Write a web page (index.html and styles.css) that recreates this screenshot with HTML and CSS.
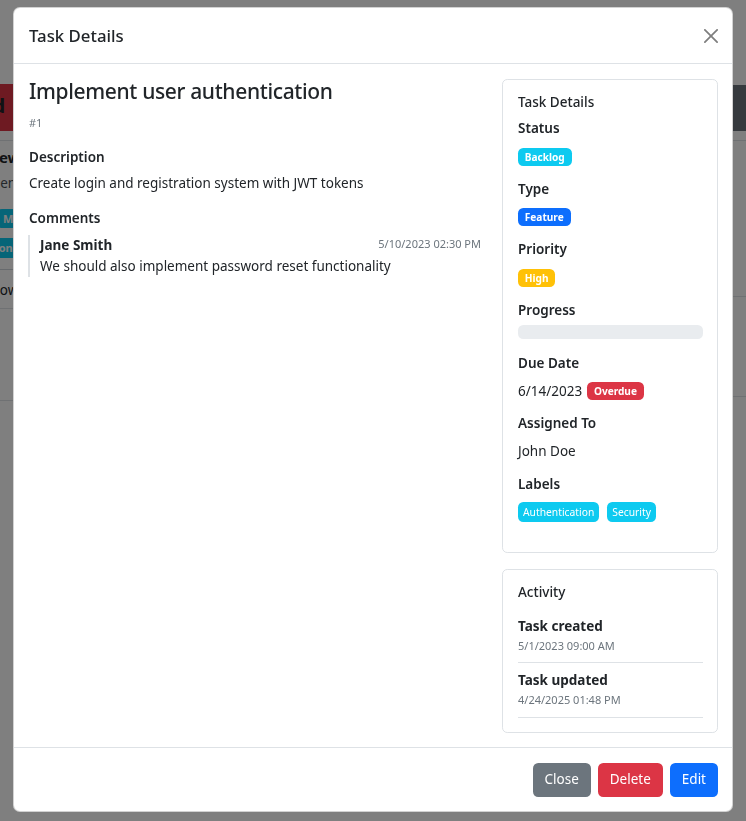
FILE: index.html
```html
<!DOCTYPE html>
<html lang="en">
<head>
<meta charset="utf-8">
<title>Task Details</title>
<link rel="stylesheet" href="styles.css">
</head>
<body>
<div class="page">
  <div class="board">
    <section class="lane lane-left">
      <div class="lane-head lane-head-red">Blocked</div>
      <div class="lane-card">
        <div class="lane-card-title">Code Review</div>
        <div class="lane-card-text">Implement login flow</div>
        <div class="lane-badges"><span class="lane-badge lane-badge-1">Medium</span></div>
        <div class="lane-badges lane-badges-2"><span class="lane-badge lane-badge-2">Frontend</span></div>
      </div>
      <div class="lane-more">Show more</div>
      <div class="lane-spacer"></div>
    </section>
    <section class="lane lane-right">
      <div class="lane-head lane-head-gray"></div>
      <div class="lane-row lane-row-1"></div>
      <div class="lane-row lane-row-2"></div>
    </section>
  </div>
</div>

<div class="modal-backdrop"></div>
<div class="modal">
  <div class="modal-content">
    <header class="modal-header">
      <h5 class="modal-title">Task Details</h5>
      <button class="btn-close" type="button" aria-label="Close">
        <svg viewBox="0 0 16 16" width="14" height="14" aria-hidden="true"><path fill="#000" d="M.293.293a1 1 0 0 1 1.414 0L8 6.586 14.293.293a1 1 0 1 1 1.414 1.414L9.414 8l6.293 6.293a1 1 0 0 1-1.414 1.414L8 9.414l-6.293 6.293a1 1 0 0 1-1.414-1.414L6.586 8 .293 1.707a1 1 0 0 1 0-1.414z"/></svg>
      </button>
    </header>
    <div class="modal-body">
      <div class="main-col">
        <h3 class="task-title">Implement user authentication</h3>
        <p class="task-id">#1</p>
        <h6 class="section-label">Description</h6>
        <p class="desc">Create login and registration system with JWT tokens</p>
        <h6 class="section-label section-label-comments">Comments</h6>
        <div class="comment">
          <div class="comment-head">
            <strong class="comment-author">Jane Smith</strong>
            <small class="comment-date">5/10/2023 02:30 PM</small>
          </div>
          <p class="comment-text">We should also implement password reset functionality</p>
        </div>
      </div>
      <aside class="side-col">
        <div class="card card-details">
          <div class="card-body">
            <h6 class="card-title">Task Details</h6>
            <div class="field">
              <div class="field-label">Status</div>
              <div class="field-value"><span class="badge bg-info">Backlog</span></div>
            </div>
            <div class="field">
              <div class="field-label">Type</div>
              <div class="field-value"><span class="badge bg-primary">Feature</span></div>
            </div>
            <div class="field">
              <div class="field-label">Priority</div>
              <div class="field-value"><span class="badge bg-warning">High</span></div>
            </div>
            <div class="field field-progress">
              <div class="field-label">Progress</div>
              <div class="progress"></div>
            </div>
            <div class="field">
              <div class="field-label">Due Date</div>
              <div class="field-value"><span>6/14/2023</span><span class="badge bg-danger">Overdue</span></div>
            </div>
            <div class="field">
              <div class="field-label">Assigned To</div>
              <div class="field-value">John Doe</div>
            </div>
            <div class="field field-labels">
              <div class="field-label">Labels</div>
              <div class="field-value"><span class="badge label-badge bg-info">Authentication</span><span class="badge label-badge bg-info">Security</span></div>
            </div>
          </div>
        </div>
        <div class="card card-activity">
          <div class="card-body">
            <h6 class="card-title card-title-activity">Activity</h6>
            <div class="activity-item">
              <div class="activity-title">Task created</div>
              <div class="activity-date">5/1/2023 09:00 AM</div>
            </div>
            <div class="activity-item">
              <div class="activity-title">Task updated</div>
              <div class="activity-date">4/24/2025 01:48 PM</div>
            </div>
          </div>
        </div>
      </aside>
    </div>
    <footer class="modal-footer">
      <button class="btn btn-secondary" type="button">Close</button>
      <button class="btn btn-danger" type="button">Delete</button>
      <button class="btn btn-primary" type="button">Edit</button>
    </footer>
  </div>
</div>
</body>
</html>
```

FILE: styles.css
```css
* { box-sizing: border-box; }

html { font-size: 14px; }

body {
  margin: 0;
  height: 821px;
  overflow: hidden;
  background: #fff;
  color: #212529;
  font-family: "Noto Sans", "Segoe UI", sans-serif;
  font-size: 13.5px;
  line-height: 21px;
}

/* ---------- page behind the modal ---------- */
.page { height: 821px; overflow: hidden; }

.board {
  display: flex;
  justify-content: space-between;
  padding-top: 84px;
}

.lane { flex: none; white-space: nowrap; }
.lane-left { width: 213px; margin-left: -200px; overflow: hidden; }
.lane-right { width: 260px; margin-right: -200px; padding-top: 1px; }

.lane-head { height: 47px; }
.lane-head-red {
  background: #dc3545;
  color: #212529;
  font-size: 20px;
  font-weight: 700;
  line-height: 44px;
  padding-left: 126px;
}
.lane-head-gray {
  height: 46px;
  background: #6c757d;
}

.lane-card {
  margin-top: 9px;
  border-top: 1px solid #dee2e6;
  border-bottom: 1px solid #ced4da;
  padding: 6px 0 12px;
}
.lane-card-title {
  font-size: 15px;
  font-weight: 700;
  line-height: 20px;
  padding-left: 126px;
}
.lane-card-text {
  margin-top: 6px;
  color: #495057;
  padding-left: 151px;
}
.lane-badges { margin-top: 14px; height: 19px; padding-left: 198px; }
.lane-badges-2 { margin-top: 10px; height: 20px; padding-left: 183px; }
.lane-badge {
  display: inline-block;
  height: 100%;
  padding: 0 5px;
  border-radius: 4px;
  background: #0dcaf0;
  color: #fff;
  font-size: 11px;
  font-weight: 700;
  line-height: 19px;
}
.lane-more {
  margin-top: 10px;
  padding: 0 0 7px 184px;
  border-bottom: 1px solid #dee2e6;
}
.lane-spacer { height: 92px; border-bottom: 1px solid #dee2e6; }

.lane-row { border-top: 1px solid #dee2e6; }
.lane-row-1 { margin-top: 9px; height: 156px; }
.lane-row-2 { height: 101px; border-bottom: 1px solid #dee2e6; }

/* ---------- modal ---------- */
.modal-backdrop {
  position: fixed;
  inset: 0;
  background: rgba(0, 0, 0, 0.5);
}

.modal {
  position: fixed;
  inset: 0;
  padding: 7px 0 0 13px;
}

.modal-content {
  width: 720px;
  background: #fff;
  border: 1px solid rgba(0, 0, 0, 0.175);
  border-radius: 7px;
}

.modal-header {
  display: flex;
  align-items: center;
  height: 56px;
  padding: 0 14px 0 15px;
  border-bottom: 1px solid #dee2e6;
}

.modal-title {
  margin: 0;
  font-size: 16.8px;
  font-weight: 500;
  line-height: 26px;
}

.btn-close {
  width: 21px;
  height: 21px;
  padding: 3.5px;
  margin: 0 -3.5px 0 auto;
  border: 0;
  background: transparent;
  opacity: 0.5;
}
.btn-close svg { display: block; }

.modal-body {
  display: grid;
  grid-template-columns: 453px 216px;
  column-gap: 21px;
  align-items: start;
  padding: 14px;
}

.main-col { padding-left: 1px; }

.task-title {
  margin: 0 0 7px;
  font-size: 21px;
  letter-spacing: -0.35px;
  font-weight: 500;
  line-height: 27px;
}

.task-id {
  margin: 0 0 14px;
  color: #6c757d;
  font-size: 11px;
}

.section-label {
  margin: 0 0 5px;
  font-size: 13.5px;
  font-weight: 600;
  line-height: 21px;
}
.section-label-comments { margin-bottom: 6px; }

.desc { margin: 0 0 14px; }

.comment {
  margin-left: -1px;
  border-left: 2px solid #dee2e6;
  padding-left: 10px;
}
.comment-head {
  display: flex;
  justify-content: space-between;
  align-items: flex-start;
}
.comment-author { font-weight: 700; }
.comment-date {
  font-size: 11px;
  color: #6c757d;
  line-height: 18px;
}
.comment-text { margin: 0; }

/* side cards */
.card {
  background: #fff;
  border: 1px solid #dee2e6;
  border-radius: 5.25px;
}
.card-body { padding: 14px 14px 14px 15px; }
.card-details { margin-top: 1px; }
.card-activity { margin-top: 16px; }

.card-title {
  margin: 0 0 7px;
  font-size: 13.5px;
  font-weight: 500;
  line-height: 17px;
}
.card-title-activity { margin-bottom: 8px; }

.field { margin-bottom: 11.5px; }
.field-label { font-weight: 600; margin-bottom: 7px; }
.field-value {
  display: flex;
  align-items: center;
  gap: 5px;
  height: 21px;
}

.field-progress { margin-bottom: 13.5px; }
.field-progress .field-label { margin-bottom: 4.5px; }
.progress {
  height: 14px;
  background: #e9ecef;
  border-radius: 5.25px;
}

.field-labels { margin-bottom: 16.5px; }
.field-labels .field-value { height: 20px; gap: 8px; }

.badge {
  display: inline-block;
  height: 18px;
  padding: 0 6.8px;
  border-radius: 5.25px;
  color: #fff;
  font-size: 10.1px;
  font-weight: 700;
  line-height: 18px;
  white-space: nowrap;
}
.label-badge {
  height: 20px;
  padding: 0 5px;
  font-weight: 400;
  font-size: 10.3px;
  line-height: 20px;
}
.bg-info { background: #0dcaf0; }
.bg-primary { background: #0d6efd; }
.bg-warning { background: #ffc107; }
.bg-danger { background: #dc3545; }

.activity-item {
  padding: 7px 0;
  border-bottom: 1px solid #dee2e6;
}
.activity-title { font-weight: 700; }
.activity-date {
  font-size: 11px;
  color: #6c757d;
  line-height: 18.4px;
}

/* footer */
.modal-footer {
  display: flex;
  justify-content: flex-end;
  padding: 11.5px 10.5px 10.5px;
  border-top: 1px solid #dee2e6;
}
.btn {
  margin: 3.5px;
  padding: 5.5px 11px;
  border: 1px solid transparent;
  border-radius: 5.25px;
  color: #fff;
  font-family: inherit;
  font-size: 13.5px;
  line-height: 21px;
}
.btn-secondary { background: #6c757d; }
.btn-danger { background: #dc3545; }
.btn-primary { background: #0d6efd; }
```
